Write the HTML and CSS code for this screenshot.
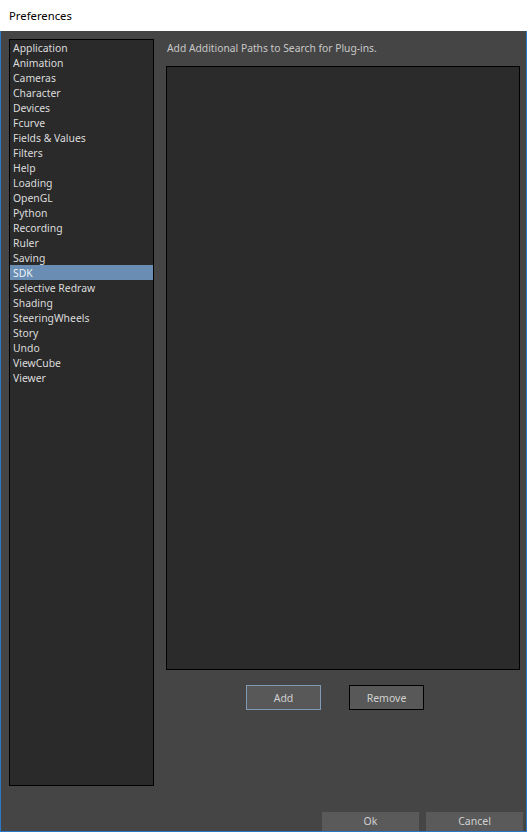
FILE: index.html
```html
<!DOCTYPE html>
<html>
<head>
<meta charset="utf-8">
<title>Preferences</title>
<link rel="stylesheet" href="styles.css">
</head>
<body>
<div class="window">
  <div class="titlebar">Preferences</div>
  <div class="content">
    <div class="main">
      <ul class="list">
        <li>Application</li>
        <li>Animation</li>
        <li>Cameras</li>
        <li>Character</li>
        <li>Devices</li>
        <li>Fcurve</li>
        <li>Fields &amp; Values</li>
        <li>Filters</li>
        <li>Help</li>
        <li>Loading</li>
        <li>OpenGL</li>
        <li>Python</li>
        <li>Recording</li>
        <li>Ruler</li>
        <li>Saving</li>
        <li class="selected">SDK</li>
        <li>Selective Redraw</li>
        <li>Shading</li>
        <li>SteeringWheels</li>
        <li>Story</li>
        <li>Undo</li>
        <li>ViewCube</li>
        <li>Viewer</li>
      </ul>
      <div class="right">
        <div class="label">Add Additional Paths to Search for Plug-ins.</div>
        <div class="paths"></div>
        <div class="actions">
          <button class="btn btn-add">Add</button>
          <button class="btn btn-remove">Remove</button>
        </div>
      </div>
    </div>
    <div class="footer">
      <button class="fbtn">Ok</button>
      <button class="fbtn">Cancel</button>
    </div>
  </div>
</div>
</body>
</html>
```
FILE: styles.css
```css
html, body {
  margin: 0;
  padding: 0;
  width: 527px;
  height: 832px;
  overflow: hidden;
  font-family: "Noto Sans", "Open Sans", sans-serif;
}
.window {
  width: 527px;
  height: 832px;
  display: flex;
  flex-direction: column;
}
.titlebar {
  height: 31px;
  line-height: 32px;
  background: #ffffff;
  color: #000;
  font-size: 11.3px;
  padding-left: 9px;
  flex: none;
}
.content {
  flex: 1;
  background: #454545;
  border: 1px solid #2b79c6;
  border-top: none;
  padding: 8px 6px 0 8px;
  overflow: hidden;
  display: flex;
  flex-direction: column;
}
.main {
  display: grid;
  grid-template-columns: 145px 1fr;
  column-gap: 12px;
  height: 747px;
  flex: none;
}
.list {
  list-style: none;
  margin: 0;
  padding: 0;
  background: #2a2a2a;
  border: 1px solid #000;
}
.list li {
  height: 15px;
  line-height: 17px;
  padding-left: 3px;
  font-size: 10.4px;
  color: #dcdcdc;
}
.list li.selected {
  background: #6a8db3;
  color: #eef3f8;
}
.right {
  display: flex;
  flex-direction: column;
}
.label {
  height: 18px;
  line-height: 19px;
  font-size: 10.3px;
  color: #c8c8c8;
  padding-left: 1px;
  margin-bottom: 9px;
}
.paths {
  height: 602px;
  background: #2b2b2b;
  border: 1px solid #000;
}
.actions {
  display: flex;
  margin-top: 15px;
  padding-left: 80px;
  gap: 28px;
}
.btn {
  height: 25px;
  background: #585858;
  color: #d0d0d0;
  font-family: "Noto Sans", "Open Sans", sans-serif;
  font-size: 10.5px;
  padding: 0;
  margin: 0;
}
.btn-add {
  width: 75px;
  border: 1px solid #7f9ab4;
}
.btn-remove {
  width: 75px;
  border: 1px solid #000;
}
.footer {
  display: flex;
  justify-content: flex-end;
  gap: 7px;
  margin-top: 26px;
  margin-right: -3px;
}
.fbtn {
  width: 97px;
  height: 23px;
  background: #5a5a5a;
  border: none;
  color: #d0d0d0;
  font-family: "Noto Sans", "Open Sans", sans-serif;
  font-size: 10.5px;
  padding: 0 0 5px 0;
  margin: 0;
}
```
